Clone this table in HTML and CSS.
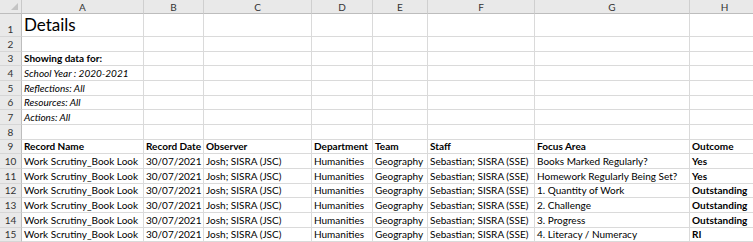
FILE: index.html
```html
<!DOCTYPE html>
<html>
<head>
<meta charset="utf-8">
<link rel="stylesheet" href="styles.css">
</head>
<body>
<div class="sheet">
  <div class="hd corner"><span class="tri"></span></div>
  <div class="hd col">A</div><div class="hd col">B</div><div class="hd col">C</div><div class="hd col">D</div><div class="hd col">E</div><div class="hd col">F</div><div class="hd col">G</div><div class="hd col">H</div>

  <div class="hd rn">1</div><div class="c title">Details</div><div class="c"></div><div class="c"></div><div class="c"></div><div class="c"></div><div class="c"></div><div class="c"></div><div class="c"></div>
  <div class="hd rn">2</div><div class="c"></div><div class="c"></div><div class="c"></div><div class="c"></div><div class="c"></div><div class="c"></div><div class="c"></div><div class="c"></div>
  <div class="hd rn">3</div><div class="c b">Showing data for:</div><div class="c"></div><div class="c"></div><div class="c"></div><div class="c"></div><div class="c"></div><div class="c"></div><div class="c"></div>
  <div class="hd rn">4</div><div class="c i">School Year : 2020-2021</div><div class="c"></div><div class="c"></div><div class="c"></div><div class="c"></div><div class="c"></div><div class="c"></div><div class="c"></div>
  <div class="hd rn">5</div><div class="c i">Reflections: All</div><div class="c"></div><div class="c"></div><div class="c"></div><div class="c"></div><div class="c"></div><div class="c"></div><div class="c"></div>
  <div class="hd rn">6</div><div class="c i">Resources: All</div><div class="c"></div><div class="c"></div><div class="c"></div><div class="c"></div><div class="c"></div><div class="c"></div><div class="c"></div>
  <div class="hd rn">7</div><div class="c i">Actions: All</div><div class="c"></div><div class="c"></div><div class="c"></div><div class="c"></div><div class="c"></div><div class="c"></div><div class="c"></div>
  <div class="hd rn">8</div><div class="c"></div><div class="c"></div><div class="c"></div><div class="c"></div><div class="c"></div><div class="c"></div><div class="c"></div><div class="c"></div>
  <div class="hd rn">9</div><div class="c b">Record Name</div><div class="c b">Record Date</div><div class="c b">Observer</div><div class="c b">Department</div><div class="c b">Team</div><div class="c b">Staff</div><div class="c b">Focus Area</div><div class="c b">Outcome</div>

  <div class="hd rn">10</div><div class="c">Work Scrutiny_Book Look</div><div class="c">30/07/2021</div><div class="c">Josh; SISRA (JSC)</div><div class="c">Humanities</div><div class="c">Geography</div><div class="c">Sebastian; SISRA (SSE)</div><div class="c">Books Marked Regularly?</div><div class="c b">Yes</div>
  <div class="hd rn">11</div><div class="c">Work Scrutiny_Book Look</div><div class="c">30/07/2021</div><div class="c">Josh; SISRA (JSC)</div><div class="c">Humanities</div><div class="c">Geography</div><div class="c">Sebastian; SISRA (SSE)</div><div class="c">Homework Regularly Being Set?</div><div class="c b">Yes</div>
  <div class="hd rn">12</div><div class="c">Work Scrutiny_Book Look</div><div class="c">30/07/2021</div><div class="c">Josh; SISRA (JSC)</div><div class="c">Humanities</div><div class="c">Geography</div><div class="c">Sebastian; SISRA (SSE)</div><div class="c">1. Quantity of Work</div><div class="c b">Outstanding</div>
  <div class="hd rn">13</div><div class="c">Work Scrutiny_Book Look</div><div class="c">30/07/2021</div><div class="c">Josh; SISRA (JSC)</div><div class="c">Humanities</div><div class="c">Geography</div><div class="c">Sebastian; SISRA (SSE)</div><div class="c">2. Challenge</div><div class="c b">Outstanding</div>
  <div class="hd rn">14</div><div class="c">Work Scrutiny_Book Look</div><div class="c">30/07/2021</div><div class="c">Josh; SISRA (JSC)</div><div class="c">Humanities</div><div class="c">Geography</div><div class="c">Sebastian; SISRA (SSE)</div><div class="c">3. Progress</div><div class="c b">Outstanding</div>
  <div class="hd rn">15</div><div class="c">Work Scrutiny_Book Look</div><div class="c">30/07/2021</div><div class="c">Josh; SISRA (JSC)</div><div class="c">Humanities</div><div class="c">Geography</div><div class="c">Sebastian; SISRA (SSE)</div><div class="c">4. Literacy / Numeracy</div><div class="c b">RI</div>
</div>
</body>
</html>
```

FILE: styles.css
```css
html, body {
  margin: 0;
  padding: 0;
  background: #ffffff;
  overflow: hidden;
}
.sheet {
  display: grid;
  grid-template-columns: 22px 122px 60px 108px 61px 55px 107px 155px 70px;
  grid-template-rows: 14px 23px repeat(14, 14.67px);
  font-family: "Lato", "Liberation Sans", sans-serif;
  font-size: 10px;
  color: #000;
}
.hd {
  background: #e9e9e9;
  color: #333;
  border-right: 1px solid #c9c9c9;
  border-bottom: 1px solid #c9c9c9;
  box-sizing: border-box;
  font-size: 10px;
}
.col {
  display: flex;
  align-items: center;
  justify-content: center;
  line-height: 1;
  border-right: 1px solid #cfcfcf;
  border-bottom: 1px solid #bdbdbd;
}
.corner {
  position: relative;
  border-bottom: 1px solid #bdbdbd;
}
.tri {
  position: absolute;
  right: 3px;
  bottom: 3px;
  width: 0;
  height: 0;
  border-left: 7px solid transparent;
  border-bottom: 7px solid #c4c4c4;
}
.rn {
  display: flex;
  align-items: flex-end;
  justify-content: center;
  padding-bottom: 2px;
  line-height: 1;
  border-right: 1px solid #bdbdbd;
  border-bottom: 1px solid #d6d6d6;
}
.c {
  box-sizing: border-box;
  border-right: 1px solid #dadada;
  border-bottom: 1px solid #dadada;
  white-space: nowrap;
  padding: 0 0 2px 2px;
  display: flex;
  align-items: flex-end;
  line-height: 1;
  min-width: 0;
}
.title {
  font-size: 17px;
  padding-bottom: 3px;
}
.b { font-weight: bold; }
.i { font-style: italic; }
```
